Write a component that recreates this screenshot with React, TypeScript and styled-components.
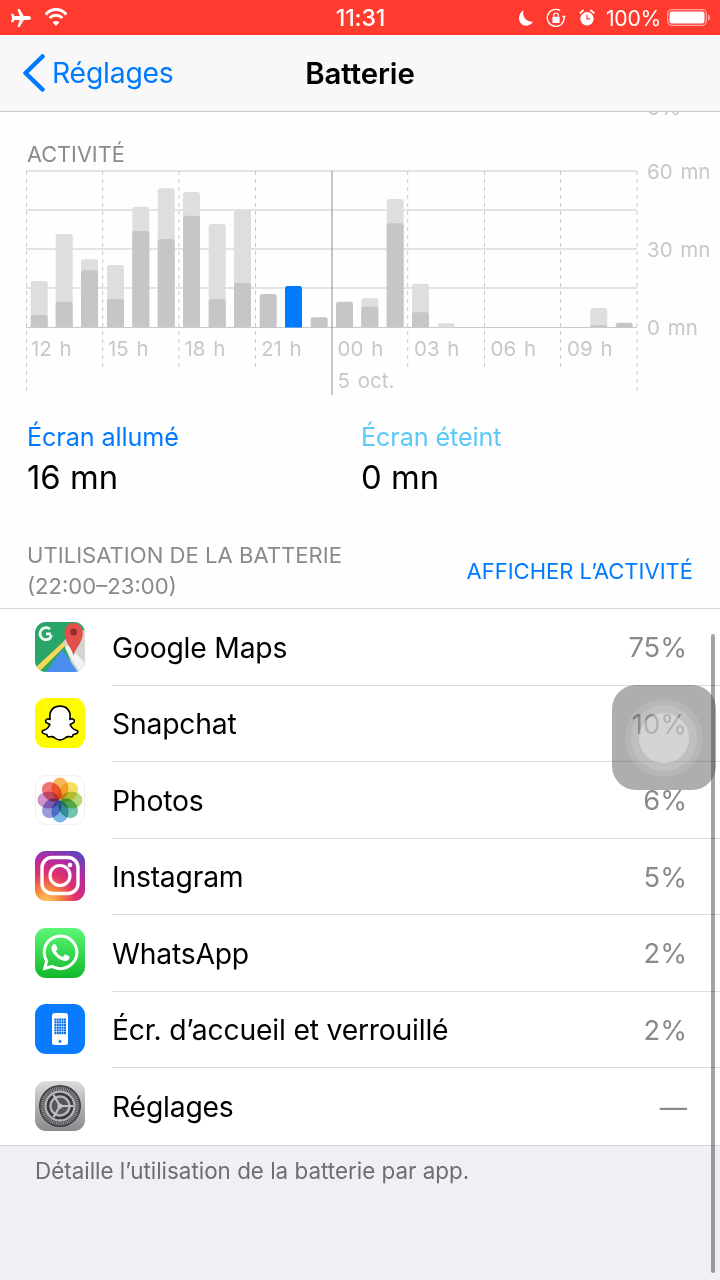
import React from "react";
import styled, { createGlobalStyle } from "styled-components";
import { FaSnapchatGhost, FaWhatsapp } from "react-icons/fa";

const SANS = `Inter, "Liberation Sans", Arial, sans-serif`;

const Global = createGlobalStyle`
  html, body { margin: 0; padding: 0; background: #efeff4; }
  body { font-family: ${SANS}; -webkit-font-smoothing: antialiased; }
`;

const Phone = styled.div`
  position: relative;
  width: 720px;
  height: 1280px;
  overflow: hidden;
  display: flex;
  flex-direction: column;
  background: #efeff4;
`;

const StatusBar = styled.div`
  height: 35px;
  background: #ff3b30;
  color: #fff;
  display: grid;
  grid-template-columns: 1fr auto 1fr;
  align-items: center;
  padding: 0 9px 0 10px;
`;
const StatusLeft = styled.div`display: flex; align-items: center; gap: 12px;`;
const StatusTime = styled.div`font-size: 23px; font-weight: 500; letter-spacing: -0.1px; margin-top: 1px;`;
const StatusRight = styled.div`display: flex; align-items: center; justify-content: flex-end; gap: 12px;`;
const StatusPct = styled.span`font-size: 21.2px; font-weight: 400; margin: 0 -6px 0 -2px; letter-spacing: -0.3px;`;

const NavBar = styled.div`
  height: 76px;
  background: #f8f8f8;
  border-bottom: 1px solid #c9c9cc;
  display: grid;
  grid-template-columns: 1fr auto 1fr;
  align-items: center;
`;
const BackLink = styled.div`
  display: flex;
  align-items: center;
  gap: 6px;
  padding-left: 22px;
  color: #007aff;
  font-size: 28.3px;
  letter-spacing: -0.2px;
`;
const NavTitle = styled.div`
  font-size: 29.4px;
  font-weight: 600;
  color: #000;
  letter-spacing: -0.1px;
`;

const Card = styled.div`
  background: #fefefe;
  display: flex;
  flex-direction: column;
`;
const ClippedPercent = styled.div`
  height: 6px;
  overflow: hidden;
  display: flex;
  align-items: flex-end;
  padding-left: 647px;
  color: #c7c7cc;
  font-size: 21px;
  line-height: 20px;
`;
const SectionLabel = styled.div`
  margin: 24px 0 0 27px;
  font-size: 21.7px;
  line-height: 24px;
  color: #8a8a8e;
`;
const ChartSvg = styled.svg`
  display: block;
  width: 720px;
  height: 235px;
  margin-top: -1px;
  overflow: visible;
`;
const ChartText = styled.text`
  font-family: ${SANS};
  font-size: 20.5px;
  word-spacing: 2px;
  fill: #c7c7cc;
`;

const Stats = styled.div`
  display: grid;
  grid-template-columns: 334px 1fr;
  padding: 22px 0 0 27px;
`;
const StatLabel = styled.div<{ $color: string }>`
  color: ${(p) => p.$color};
  font-size: 25.2px;
  line-height: 30px;
  letter-spacing: -0.1px;
`;
const StatValue = styled.div`
  color: #000;
  font-size: 32.8px;
  line-height: 40px;
  margin-top: 5px;
`;

const UsageHead = styled.div`
  display: flex;
  justify-content: space-between;
  align-items: center;
  padding: 43px 27px 6px 27px;
`;
const UsageTitle = styled.div`
  color: #8a8a8e;
  font-size: 22.1px;
  line-height: 31px;
`;
const UsageAction = styled.div`
  color: #007aff;
  font-size: 22px;
  margin-top: -1px;
`;

const Table = styled.div`
  background: #fff;
  border-top: 1px solid #d6d6da;
  border-bottom: 1px solid #d8d8dc;
`;
const Row = styled.div`
  height: 76.5px;
  display: flex;
  align-items: center;
  padding-left: 35px;
`;
const IconSlot = styled.div`
  width: 50px;
  height: 50px;
  flex: none;
  margin: -1px 27px 0 0;
`;
const RowBody = styled.div<{ $last: boolean }>`
  flex: 1;
  height: 100%;
  display: flex;
  align-items: center;
  justify-content: space-between;
  padding: 2px 33px 0 0;
  box-sizing: border-box;
  border-bottom: ${(p) => (p.$last ? "none" : "1px solid #dcdce0")};
`;
const RowName = styled.div`
  font-size: 28.3px;
  color: #000;
  letter-spacing: -0.2px;
`;
const RowValue = styled.div`
  font-size: 27.3px;
  color: #8a8a8e;
`;
const Footer = styled.div`
  padding: 12px 35px;
  color: #6d6d72;
  font-size: 22.4px;
  line-height: 26px;
`;

const ScrollBar = styled.div`
  position: absolute;
  left: 711px;
  top: 634px;
  width: 4px;
  height: 639px;
  border-radius: 2px;
  background: rgba(0, 0, 0, 0.36);
`;
const AssistiveTouch = styled.div`
  position: absolute;
  left: 612px;
  top: 685px;
  width: 104px;
  height: 105px;
  border-radius: 24px;
  background: rgba(70, 70, 72, 0.44);
  display: flex;
  align-items: center;
  justify-content: center;
`;
const TouchRing = styled.div<{ $size: number; $alpha: number }>`
  width: ${(p) => p.$size}px;
  height: ${(p) => p.$size}px;
  border-radius: 50%;
  background: rgba(255, 255, 255, ${(p) => p.$alpha});
  display: flex;
  align-items: center;
  justify-content: center;
`;

const AppFrame = styled.svg`
  display: block;
  width: 50px;
  height: 50px;
`;
const GhostTile = styled.div`
  width: 50px;
  height: 50px;
  border-radius: 11px;
  background: #fffc00;
  display: flex;
  align-items: center;
  justify-content: center;
  color: #fff;
  & > svg { stroke: #000; stroke-width: 50px; paint-order: stroke; overflow: visible; }
`;
const WhatsTile = styled.div`
  width: 50px;
  height: 50px;
  border-radius: 11px;
  background: linear-gradient(#5df777, #12b82a);
  display: flex;
  align-items: center;
  justify-content: center;
  color: #fff;
`;

/* ---------- status icons ---------- */
const Plane = () => (
  <svg width="22" height="20" viewBox="0 0 24 22" fill="#fff">
    <path d="M8.2 1h2.3l4.6 7.8h5.2c1.5 0 2.7 1 2.700 2.200s-1.200 2.200-2.700 2.200h-5.200L10.500 21H8.200l2.200-7.800H5l-1.800 2.400H1L2.300 11 1 6.400h2.200L5 8.800h5.400z" />
  </svg>
);
const Wifi = () => (
  <svg width="24" height="19" viewBox="0 0 28 22" fill="none" stroke="#fff" strokeWidth="3.400">
    <path d="M2 7.500C9-.2 19-.2 26 7.500" />
    <path d="M6.600 11.600c4.400-4.400 10.400-4.400 14.800 0" />
    <path d="M14 21l-4-4.600c2.300-1.900 5.700-1.900 8 0z" fill="#fff" stroke="none" />
  </svg>
);
const Moon = () => (
  <svg width="16" height="18" viewBox="0 0 19 22" fill="#fff">
    <path d="M6.500 1.500C4.500 8.500 9 15.500 18 15.700 15.900 18.800 12.800 20.500 9.800 20.500 5 20.500 1 16.300 1 11.300 1 7 3.200 3.400 6.500 1.500z" />
  </svg>
);
const RotationLock = () => (
  <svg width="20" height="20" viewBox="0 0 22 22" fill="none" stroke="#fff" strokeWidth="1.500">
    <path d="M20 10.500A9.300 9.300 0 1 1 15.500 2.900" />
    <path d="M21.800 8.500l-2 3.500-2.500-3.500z" fill="#fff" stroke="none" />
    <rect x="7" y="9.500" width="8" height="7" rx="1" fill="#fff" stroke="none" />
    <path d="M8.500 9.500V8a2.500 2.500 0 0 1 5 0v1.500" strokeWidth="1.300" />
  </svg>
);
const Alarm = () => (
  <svg width="18" height="19" viewBox="0 0 22 24" fill="#fff">
    <circle cx="11" cy="13.500" r="8.500" />
    <path d="M1 6l5-4.500 1.500 1.500L2.500 7.500zM21 6l-5-4.500L14.500 3l5 4.500z" />
    <path d="M11 8.500v5.200h3.800" fill="none" stroke="#ff3b30" strokeWidth="1.500" />
  </svg>
);
const BatteryFull = () => (
  <svg width="44" height="17" viewBox="0 0 44 17">
    <rect x="0.700" y="0.700" width="38.600" height="15.600" rx="4" fill="none" stroke="rgba(255,255,255,.55)" strokeWidth="1.200" />
    <rect x="2.500" y="2.500" width="35" height="12" rx="2.500" fill="#fff" />
    <path d="M41 5.500c1.200.3 2 1.500 2 3s-.8 2.700-2 3z" fill="rgba(255,255,255,.55)" />
  </svg>
);
const BackChevron = () => (
  <svg width="24" height="38" viewBox="0 0 24 38" fill="none" stroke="#007aff" strokeWidth="4.500" strokeLinecap="round" strokeLinejoin="round">
    <path d="M20.500 2.500L3.500 19l17 16.500" />
  </svg>
);

/* ---------- app icons ---------- */
const MapsIcon = () => (
  <AppFrame viewBox="0 0 50 50">
    <defs>
      <clipPath id="mapClip"><rect width="50" height="50" rx="11" /></clipPath>
    </defs>
    <g clipPath="url(#mapClip)">
      <rect width="50" height="50" fill="#2aa568" />
      <path d="M28 20L38 8h12v42H40z" fill="#d4d4d2" />
      <path d="M27 28L11 50h32z" fill="#4a8ff0" />
      <path d="M0 46L28 20l2.500 3.500L4 50H0z" fill="#f6d757" />
      <path d="M30 26l3-3 17 18v9h-5z" fill="#f4f4f2" />
      <path d="M38.500 33.500C36.500 25 29.500 21 29.500 10a9.200 9.200 0 0 1 18.400 0c0 11-7 15-9.400 23.500z" fill="#e2504a" />
      <circle cx="38.700" cy="10" r="3.500" fill="#982c2c" />
      <path d="M16 11.800h-5M16.300 13c-.5 3-2.600 4.700-5.200 4.700a6 6 0 1 1 3.900-10.500" fill="none" stroke="#f2faf5" strokeWidth="2.700" />
    </g>
  </AppFrame>
);
const petals = ["#f8a93c", "#f6d94a", "#a9d25c", "#58b99c", "#60a9e2", "#8b89d2", "#c684c6", "#ee5d5f"];
const PhotosIcon = () => (
  <AppFrame viewBox="0 0 50 50">
    <rect x="0.500" y="0.500" width="49" height="49" rx="11" fill="#fff" stroke="#f0f0f0" />
    {petals.map((color, i) => (
      <ellipse
        key={color}
        cx="25"
        cy="13.500"
        rx="8.600"
        ry="11"
        fill={color}
        fillOpacity="0.85"
        style={{ mixBlendMode: "multiply" }}
        transform={`rotate(${i * 45} 25 25)`}
      />
    ))}
  </AppFrame>
);
const InstagramIcon = () => (
  <AppFrame viewBox="0 0 50 50">
    <defs>
      <radialGradient id="igGrad" cx="22%" cy="105%" r="120%">
        <stop offset="0" stopColor="#fdd36a" />
        <stop offset="0.25" stopColor="#f9873b" />
        <stop offset="0.5" stopColor="#e1306c" />
        <stop offset="0.75" stopColor="#b52aa0" />
        <stop offset="1" stopColor="#5b45c2" />
      </radialGradient>
    </defs>
    <rect width="50" height="50" rx="11" fill="url(#igGrad)" />
    <rect x="7" y="6.500" width="36" height="36" rx="10" fill="none" stroke="#fff" strokeWidth="3.400" />
    <circle cx="25" cy="24.500" r="10" fill="none" stroke="#fff" strokeWidth="3.200" />
    <circle cx="35" cy="14" r="2.300" fill="#fff" />
  </AppFrame>
);
const ScreenIcon = () => {
  const dots: React.ReactElement[] = [];
  for (let r = 0; r < 6; r++)
    for (let c = 0; c < 5; c++)
      dots.push(<rect key={`${r}-${c}`} x={19.400 + c * 2.400} y={14.500 + r * 2.700} width="2" height="2.200" fill="#0f6fe6" />);
  return (
    <AppFrame viewBox="0 0 50 50">
      <rect width="50" height="50" rx="11" fill="#0a7aff" />
      <rect x="17" y="9" width="16" height="32" rx="2.500" fill="#fff" />
      <circle cx="25" cy="37.500" r="1.400" fill="#0a7aff" />
      {dots}
    </AppFrame>
  );
};
const gearTicks = Array.from({ length: 60 }, (_, i) => i * 6);
const SettingsIcon = () => (
  <AppFrame viewBox="0 0 50 50">
    <defs>
      <linearGradient id="setGrad" x1="0" x2="0" y1="0" y2="1">
        <stop offset="0" stopColor="#dcdcde" />
        <stop offset="1" stopColor="#8a8a8d" />
      </linearGradient>
    </defs>
    <rect width="50" height="50" rx="11" fill="url(#setGrad)" />
    <circle cx="25" cy="25" r="21" fill="#3d3d41" />
    {gearTicks.map((a) => (
      <rect key={a} x="24.500" y="5.500" width="1" height="3.500" fill="#9c9c9f" transform={`rotate(${a} 25 25)`} />
    ))}
    <circle cx="25" cy="25" r="14.500" fill="#3a3a3e" stroke="#b4b4b7" strokeWidth="2.400" />
    <circle cx="25" cy="25" r="9.500" fill="#55555a" stroke="#b4b4b7" strokeWidth="2.400" />
    <path d="M25 25H38M25 25L18.500 13.700M25 25L18.500 36.300" stroke="#c2c2c5" strokeWidth="2.200" />
    <circle cx="25" cy="25" r="2.600" fill="#c2c2c5" />
  </AppFrame>
);

/* ---------- chart data (pixel geometry of the plot) ---------- */
type Bar = { x: number; light?: number; dark?: number; blue?: number };
const BASE = 327.500;
const bars: Bar[] = [
  { x: 30.700, light: 281, dark: 315 },
  { x: 55.700, light: 234, dark: 301.700 },
  { x: 81, light: 259.300, dark: 270.300 },
  { x: 107, light: 265, dark: 299 },
  { x: 132.300, light: 206.700, dark: 231 },
  { x: 157.700, light: 188.300, dark: 239 },
  { x: 183, light: 192, dark: 215.700 },
  { x: 208.700, light: 224, dark: 299 },
  { x: 234, light: 210, dark: 283 },
  { x: 259.700, dark: 294 },
  { x: 285, blue: 286 },
  { x: 310.700, dark: 317.300 },
  { x: 336, dark: 301.700 },
  { x: 361.300, light: 298.300, dark: 306.700 },
  { x: 386.700, light: 199, dark: 223.300 },
  { x: 412, light: 283.700, dark: 312.300 },
  { x: 437.700, light: 323.300 },
  { x: 590.300, light: 308, dark: 325.300 },
  { x: 615.700, dark: 322.700 },
];
const gridY = [171, 210, 249, 288, 327.500];
const dashed: [number, number][] = [
  [26.500, 395], [102.700, 367], [179, 367], [255.500, 367],
  [407.700, 367], [484.500, 367], [560.500, 367], [637, 395],
];
const hours: [string, number][] = [
  ["12 h", 31], ["15 h", 108], ["18 h", 184.500], ["21 h", 261],
  ["00 h", 337.500], ["03 h", 414], ["06 h", 490.500], ["09 h", 567],
];
const yLabels: [string, number][] = [["60 mn", 178.500], ["30 mn", 257], ["0 mn", 335]];

const barPath = (x: number, top: number) => {
  const w = 17;
  const r = Math.min(2.500, BASE - top);
  return `M${x} ${BASE}V${top + r}Q${x} ${top} ${x + r} ${top}H${x + w - r}Q${x + w} ${top} ${x + w} ${top + r}V${BASE}z`;
};

const Chart = () => (
  <ChartSvg viewBox="0 165 720 235">
    {gridY.map((y) => (
      <line key={y} x1="26" x2="637" y1={y} y2={y} stroke="#c9c9cc" strokeWidth="1" />
    ))}
    {dashed.map(([x, end]) => (
      <line key={x} x1={x} x2={x} y1="171" y2={end} stroke="#c9c9cc" strokeWidth="1" strokeDasharray="4 4" />
    ))}
    <line x1="332" x2="332" y1="171" y2="395" stroke="#8e8e92" strokeWidth="1" />
    {bars.map((b) => (
      <g key={b.x}>
        {b.light !== undefined && <path d={barPath(b.x, b.light)} fill="#dedee0" />}
        {b.dark !== undefined && <path d={barPath(b.x, b.dark)} fill="#c6c6c9" />}
        {b.blue !== undefined && <path d={barPath(b.x, b.blue)} fill="#007aff" />}
      </g>
    ))}
    {hours.map(([t, x]) => (
      <ChartText key={t} x={x} y="356">{t}</ChartText>
    ))}
    <ChartText x="337.500" y="388">5 oct.</ChartText>
    {yLabels.map(([t, y]) => (
      <ChartText key={t} x="647" y={y}>{t}</ChartText>
    ))}
  </ChartSvg>
);

const apps: { name: string; value: string; icon: React.ReactNode }[] = [
  { name: "Google Maps", value: "75%", icon: <MapsIcon /> },
  { name: "Snapchat", value: "10%", icon: <GhostTile><FaSnapchatGhost size={34} /></GhostTile> },
  { name: "Photos", value: "6%", icon: <PhotosIcon /> },
  { name: "Instagram", value: "5%", icon: <InstagramIcon /> },
  { name: "WhatsApp", value: "2%", icon: <WhatsTile><FaWhatsapp size={41} /></WhatsTile> },
  { name: "Écr. d’accueil et verrouillé", value: "2%", icon: <ScreenIcon /> },
  { name: "Réglages", value: "—", icon: <SettingsIcon /> },
];

export default function App() {
  return (
    <Phone>
      <Global />
      <StatusBar>
        <StatusLeft><Plane /><Wifi /></StatusLeft>
        <StatusTime>11:31</StatusTime>
        <StatusRight>
          <Moon /><RotationLock /><Alarm />
          <StatusPct>100%</StatusPct>
          <BatteryFull />
        </StatusRight>
      </StatusBar>
      <NavBar>
        <BackLink><BackChevron />Réglages</BackLink>
        <NavTitle>Batterie</NavTitle>
      </NavBar>
      <Card>
        <ClippedPercent>0%</ClippedPercent>
        <SectionLabel>ACTIVITÉ</SectionLabel>
        <Chart />
        <Stats>
          <div>
            <StatLabel $color="#007aff">Écran allumé</StatLabel>
            <StatValue>16 mn</StatValue>
          </div>
          <div>
            <StatLabel $color="#5ac8fa">Écran éteint</StatLabel>
            <StatValue>0 mn</StatValue>
          </div>
        </Stats>
        <UsageHead>
          <UsageTitle>UTILISATION DE LA BATTERIE<br />(22:00–23:00)</UsageTitle>
          <UsageAction>AFFICHER L’ACTIVITÉ</UsageAction>
        </UsageHead>
      </Card>
      <Table>
        {apps.map((a, i) => (
          <Row key={a.name}>
            <IconSlot>{a.icon}</IconSlot>
            <RowBody $last={i === apps.length - 1}>
              <RowName>{a.name}</RowName>
              <RowValue>{a.value}</RowValue>
            </RowBody>
          </Row>
        ))}
      </Table>
      <Footer>Détaille l’utilisation de la batterie par app.</Footer>
      <ScrollBar />
      <AssistiveTouch>
        <TouchRing $size={78} $alpha={0.1}>
          <TouchRing $size={66} $alpha={0.14}>
            <TouchRing $size={50} $alpha={0.32} />
          </TouchRing>
        </TouchRing>
      </AssistiveTouch>
    </Phone>
  );
}
